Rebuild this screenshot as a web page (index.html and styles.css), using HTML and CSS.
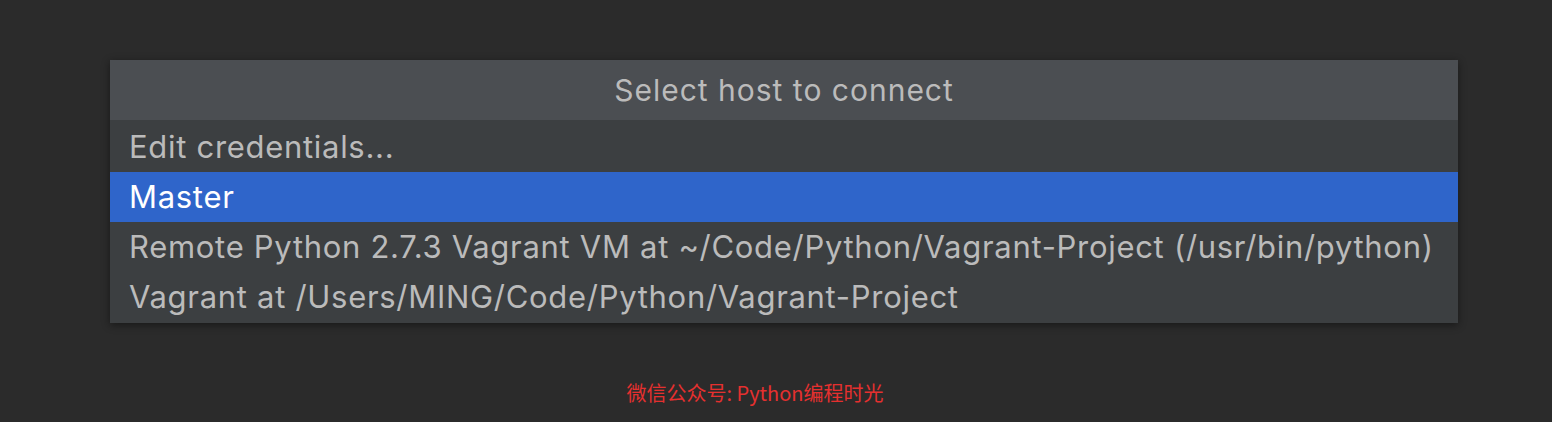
FILE: index.html
```html
<!DOCTYPE html>
<html>
  <head>
    <title>Select host to connect</title>
    <link rel="stylesheet" href="styles.css">
  </head>

  <body>
    <main class="stage">
      <div class="popup">
        <div class="popup-title">Select host to connect</div>
        <ul class="host-list">
          <li class="host">Edit credentials...</li>
          <li class="host selected">Master</li>
          <li class="host">Remote Python 2.7.3 Vagrant VM at ~/Code/Python/Vagrant-Project (/usr/bin/python)</li>
          <li class="host">Vagrant at /Users/MING/Code/Python/Vagrant-Project</li>
        </ul>
      </div>
      <p class="watermark">微信公众号: Python编程时光</p>
    </main>
  </body>
</html>
```

FILE: styles.css
```css
body {
  margin: 0;
  background: #2b2b2b;
  font-family: "Inter", "Noto Sans", sans-serif;
  color: #bbbbbb;
}
.stage {
  padding: 60px 94px 0 110px;
  height: 422px;
  box-sizing: border-box;
  display: flex;
  flex-direction: column;
}
.popup {
  background: #3c3f41;
  box-shadow: 0 2px 8px rgba(0, 0, 0, 0.45);
}
.popup-title {
  height: 60px;
  background: #4b4e52;
  display: flex;
  align-items: center;
  justify-content: center;
  font-size: 30px;
  letter-spacing: 1px;
  color: #bbbbbb;
}
.host-list {
  list-style: none;
  margin: 0;
  padding: 2px 0 1px;
}
.host {
  height: 50px;
  line-height: 50px;
  padding: 0 19px;
  font-size: 31px;
  letter-spacing: 0.7px;
  white-space: nowrap;
}
.host.selected {
  background: #2f65ca;
  color: #ffffff;
}
.watermark {
  margin: 55px -94px 0 -110px;
  padding-right: 42px;
  text-align: center;
  font-family: "Noto Sans CJK SC", sans-serif;
  font-size: 20px;
  color: #e5302f;
}
```
